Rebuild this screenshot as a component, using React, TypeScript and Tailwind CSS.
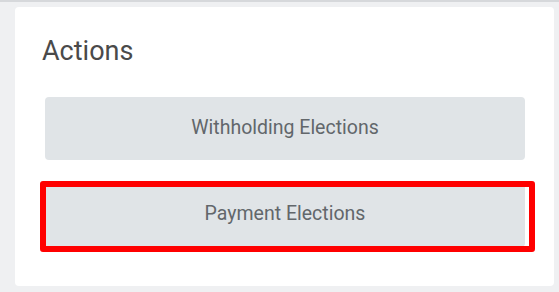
export default function App() {
  return (
    <div className="w-[559px] h-[292px] bg-[#eff0f2] border-t-2 border-[#d6d8db] pt-[5px] pl-[15px] pr-[5px] pb-[6px] font-['Roboto','Liberation_Sans',sans-serif]">
      <div className="h-full bg-white rounded-[4px] pt-[31px] pl-[30px] pr-[29px]">
        <h2 className="-ml-[3px] text-[27px] leading-[27px] text-[#4a4a4a] font-normal">Actions</h2>
        <div className="mt-[32px] flex flex-col gap-[24px]">
          <button className="h-[63px] w-full rounded-[4px] bg-[#e0e4e7] pb-[2px] text-[19.5px] text-[#62676b]">
            Withholding Elections
          </button>
          <div className="relative">
            <button className="h-[63px] w-full rounded-[4px] bg-[#e0e4e7] pb-[3px] text-[19.5px] text-[#62676b]">
              Payment Elections
            </button>
            {/* highlight annotation */}
            <div className="absolute -left-[5px] -right-[10px] -top-[3px] -bottom-[5px] border-[6px] border-[#ff0000] rounded-[3px] pointer-events-none" />
          </div>
        </div>
      </div>
    </div>
  );
}
